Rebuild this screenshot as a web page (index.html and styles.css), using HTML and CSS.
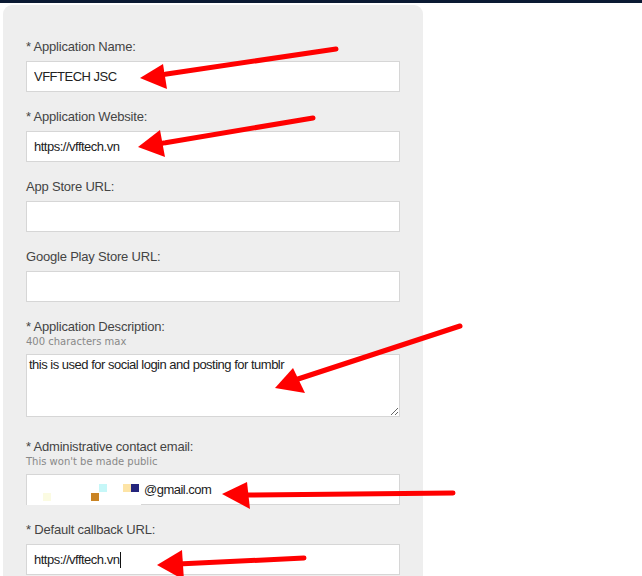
FILE: index.html
```html
<!DOCTYPE html>
<html lang="en">
<head>
    <meta charset="UTF-8">
    <meta name="viewport" content="width=device-width, initial-scale=1.0">
    <title>Register Application</title>

    <link rel="stylesheet" href="styles.css">
</head>
<body>
    <div class="topbar"></div>

    <div class="page">
        <form class="panel">
            <div class="row">
                <label class="label">* Application Name:</label>
                <input class="field" type="text" value="VFFTECH JSC">
            </div>

            <div class="row">
                <label class="label">* Application Website:</label>
                <input class="field" type="text" value="https://vfftech.vn">
            </div>

            <div class="row">
                <label class="label">App Store URL:</label>
                <input class="field" type="text" value="">
            </div>

            <div class="row">
                <label class="label">Google Play Store URL:</label>
                <input class="field" type="text" value="">
            </div>

            <div class="row tall">
                <label class="label">* Application Description:</label>
                <div class="hint">400 characters max</div>
                <textarea class="field area">this is used for social login and posting for tumblr</textarea>
            </div>

            <div class="row">
                <label class="label">* Administrative contact email:</label>
                <div class="hint">This won't be made public</div>
                <div class="wrap">
                    <input class="field email" type="text" value="@gmail.com">
                    <!-- redacted part of the address -->
                    <div class="redact">
                        <span class="px p1"></span>
                        <span class="px p2"></span>
                        <span class="px p3"></span>
                        <span class="px p4"></span>
                        <span class="px p5"></span>
                    </div>
                </div>
            </div>

            <div class="row">
                <label class="label">* Default callback URL:</label>
                <div class="wrap">
                    <input class="field" type="text" value="https://vfftech.vn">
                    <span class="caret"></span>
                </div>
            </div>
        </form>

        <!-- annotation arrows drawn over the screenshot -->
        <svg class="arrows" width="642" height="576" viewBox="0 0 642 576">
            <g stroke="#ff0000" stroke-width="5" stroke-linecap="round" fill="none">
                <line x1="336" y1="47" x2="160" y2="73"/>
                <line x1="313" y1="116" x2="158" y2="142"/>
                <line x1="460" y1="324" x2="295" y2="378"/>
                <line x1="453" y1="491" x2="244" y2="493"/>
                <line x1="304" y1="556" x2="178" y2="562"/>
            </g>
            <g fill="#ff0000">
                <polygon points="140,76 163,62 167,87"/>
                <polygon points="138,145 160,128 165,155"/>
                <polygon points="275,386 293,366 305,391"/>
                <polygon points="222,492 247,480 250,507"/>
                <polygon points="157,563 182,548 184,578"/>
            </g>
        </svg>
    </div>
</body>
</html>
```

FILE: styles.css
```css
*{
    margin: 0;
    padding: 0;
    box-sizing: border-box;
}

body{
    background-color: #ffffff;
    font-family: "Liberation Sans", Arial, sans-serif;
    height: 576px;
    overflow: hidden;
}

.topbar{
    height: 3px;
    background-color: #0b1a33;
}

.page{
    position: relative;
}

.panel{
    margin: 2px 0 0 3px;
    width: 420px;
    height: 571px;
    overflow: hidden;
    padding: 34px 23px 0 23px;
    background-color: #eeeeee;
    border-radius: 9px 9px 0 0;
}

.row{
    margin-bottom: 17px;
}

.row.tall{
    margin-bottom: 22px;
}

.label{
    display: block;
    font-size: 13px;
    line-height: 16px;
    letter-spacing: -0.2px;
    color: #444444;
    margin-bottom: 6px;
}

.hint{
    font-family: "DejaVu Sans", Verdana, sans-serif;
    font-size: 10px;
    line-height: 12px;
    color: #888888;
    margin: -5px 0 6px 0;
}

.field{
    display: block;
    width: 374px;
    height: 31px;
    padding: 0 7px;
    border: 1px solid #d6d6d6;
    background-color: #ffffff;
    font-family: "Liberation Sans", Arial, sans-serif;
    font-size: 13px;
    letter-spacing: -0.5px;
    color: #222222;
    outline: none;
}

.area{
    height: 63px;
    padding: 2px 2px;
    resize: vertical;
    line-height: 16px;
}

.email{
    padding-left: 117px;
}

.wrap{
    position: relative;
}

.redact{
    position: absolute;
    left: 1px;
    top: 1px;
    width: 114px;
    height: 30px;
    background-color: #ffffff;
}

.px{
    position: absolute;
    width: 8px;
    height: 8px;
}

.p1{ left: 16px; top: 18px; background-color: #fbfbe2; }
.p2{ left: 64px; top: 18px; background-color: #c98424; }
.p3{ left: 72px; top: 9px; background-color: #c6f7f8; }
.p4{ left: 96px; top: 9px; background-color: #fde4a6; }
.p5{ left: 104px; top: 9px; background-color: #24257c; }

.caret{
    position: absolute;
    left: 94px;
    top: 8px;
    width: 1px;
    height: 16px;
    background-color: #111111;
}

.arrows{
    position: absolute;
    left: 0;
    top: -3px;
    pointer-events: none;
}
```
